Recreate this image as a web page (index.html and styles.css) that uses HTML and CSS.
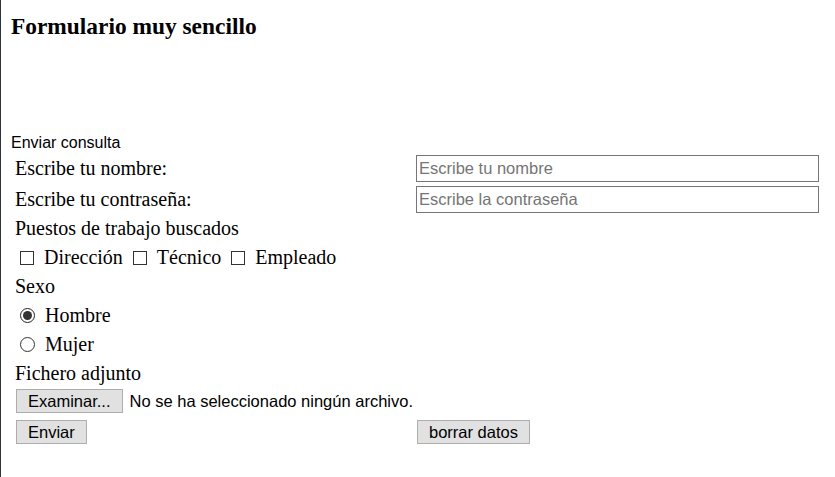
FILE: index.html
```html
<!DOCTYPE html>
<html lang="es">
<head>
<meta charset="utf-8">
<title>Formulario muy sencillo</title>
<link rel="stylesheet" href="styles.css">
</head>
<body>
<h3 class="title">Formulario muy sencillo</h3>
<form class="form">
  <div class="caption">Enviar consulta</div>
  <div class="grid">
    <label class="label row-a" for="nombre">Escribe tu nombre:</label>
    <input class="text" id="nombre" type="text" placeholder="Escribe tu nombre">
    <label class="label row-b" for="pass">Escribe tu contraseña:</label>
    <input class="text" id="pass" type="password" placeholder="Escribe la contraseña">
    <div class="label full">Puestos de trabajo buscados</div>
    <div class="full options">
      <label class="opt"><input class="check" type="checkbox"> Dirección</label>
      <label class="opt"><input class="check" type="checkbox"> Técnico</label>
      <label class="opt"><input class="check" type="checkbox"> Empleado</label>
    </div>
    <div class="label full">Sexo</div>
    <div class="full options"><label class="opt"><input class="radio" type="radio" name="sexo" checked> Hombre</label></div>
    <div class="full options"><label class="opt"><input class="radio" type="radio" name="sexo"> Mujer</label></div>
    <div class="label full">Fichero adjunto</div>
    <div class="full file">
      <span class="btn">Examinar...</span>
      <span class="filetext">No se ha seleccionado ningún archivo.</span>
    </div>
    <div class="cell"><button class="btn" type="submit">Enviar</button></div>
    <div class="cell"><button class="btn" type="reset">borrar datos</button></div>
  </div>
</form>
</body>
</html>
```
FILE: styles.css
```css
html {
  border-left: 1px solid #2e3436;
  min-height: 100%;
  box-sizing: border-box;
}
body {
  margin: 0;
  padding: 0 0 0 10px;
  font-family: "Liberation Serif", "Times New Roman", serif;
  color: #000;
  background: #fff;
}
.title {
  font-size: 23.4px;
  font-weight: bold;
  margin: 0;
  padding-top: 13px;
  line-height: 27px;
}
.form {
  margin-top: 94px;
}
.caption {
  font-family: "Liberation Sans", Arial, sans-serif;
  font-size: 16px;
  line-height: 18px;
  margin-bottom: 1px;
}
.grid {
  display: grid;
  grid-template-columns: 401px 403px;
  padding-left: 4px;
  font-size: 20px;
}
.label {
  line-height: 29px;
  height: 29px;
}
.label.row-a {
  line-height: 31px;
  height: 31px;
}
.label.row-b {
  line-height: 30px;
  height: 30px;
}
.full {
  grid-column: 1 / 3;
}
.text {
  box-sizing: border-box;
  width: 403px;
  height: 27px;
  margin: 2px 0 0;
  border: 1px solid #767676;
  padding: 1px 2px;
  font-family: "Liberation Sans", Arial, sans-serif;
  font-size: 16.5px;
  color: #000;
}
.text::placeholder {
  color: #757575;
}
.options {
  height: 29px;
  display: flex;
  align-items: center;
  gap: 10px;
  padding-left: 5px;
}
.opt {
  display: flex;
  align-items: center;
  gap: 10px;
}
.check, .radio {
  appearance: none;
  -webkit-appearance: none;
  flex-shrink: 0;
  margin: 0;
  width: 14px;
  height: 14px;
  border: 1px solid #333;
  background: #fff;
  box-sizing: border-box;
}
.radio {
  width: 15px;
  height: 15px;
  border-radius: 50%;
  display: grid;
  place-items: center;
}
.radio:checked {
  border-color: #222;
}
.radio:checked::after {
  content: "";
  width: 9px;
  height: 9px;
  border-radius: 50%;
  background: #333;
}
.file {
  display: flex;
  align-items: center;
  gap: 7px;
  height: 26px;
}
.filetext {
  font-family: "Liberation Sans", Arial, sans-serif;
  font-size: 16.5px;
}
.btn {
  display: inline-block;
  box-sizing: border-box;
  height: 24px;
  margin-left: 1px;
  padding: 0 11px;
  background: #e1e1e1;
  border: 1px solid #adadad;
  font-family: "Liberation Sans", Arial, sans-serif;
  font-size: 16.5px;
  line-height: 22px;
  color: #000;
  border-radius: 0;
}
.cell {
  padding-top: 6px;
}
```
